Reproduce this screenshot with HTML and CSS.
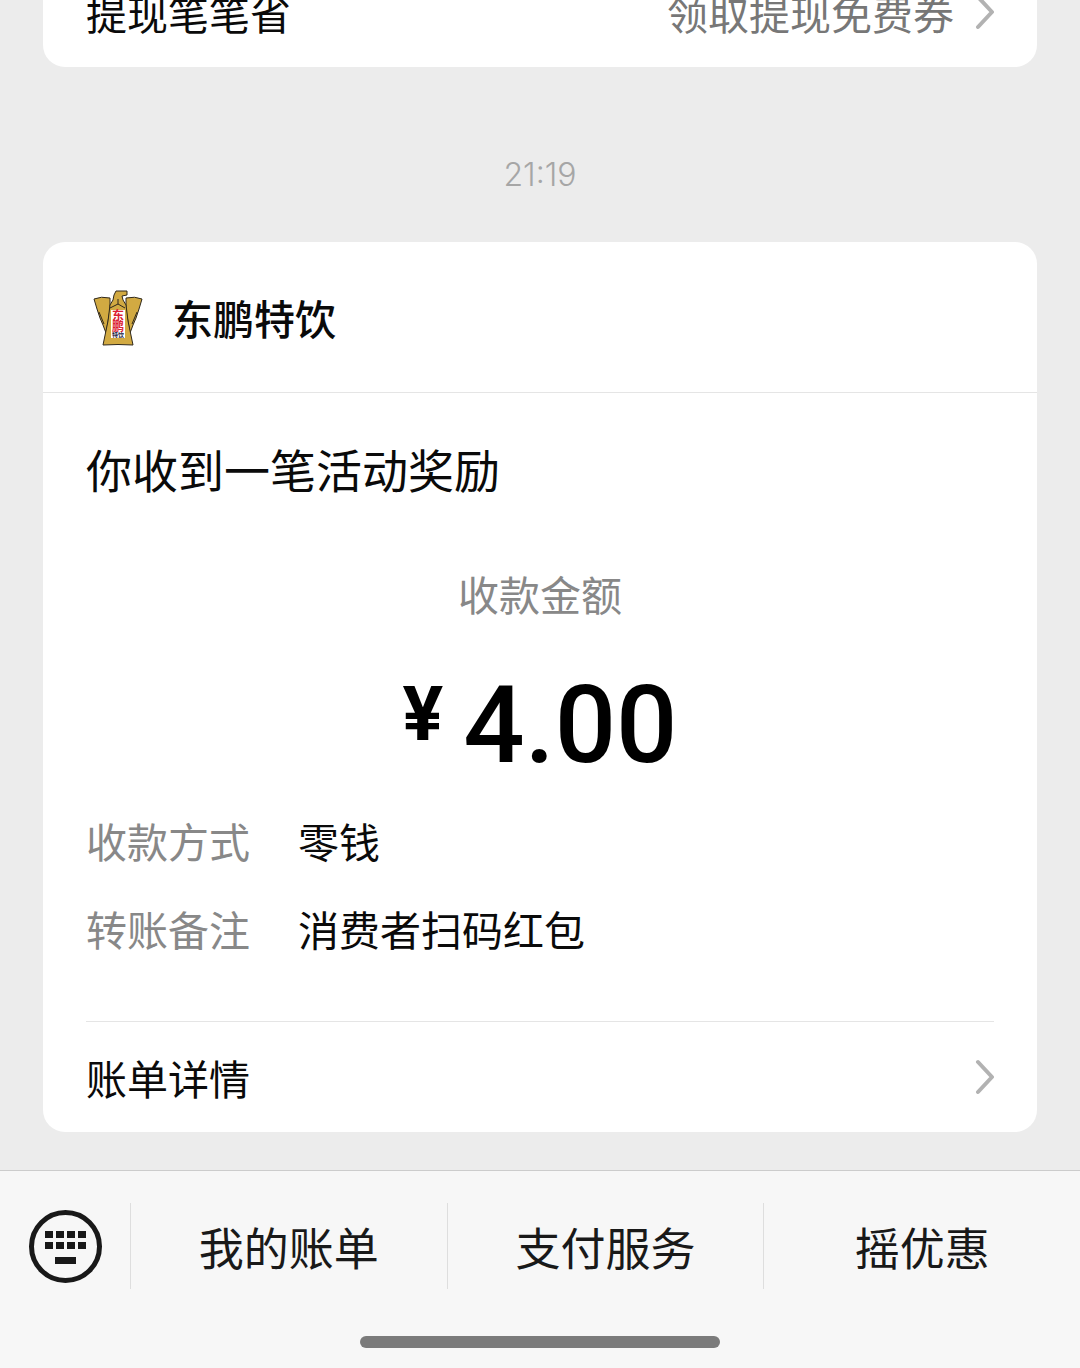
FILE: index.html
```html
<!DOCTYPE html>
<html lang="zh-CN">
<head>
  <meta charset="UTF-8">
  <meta name="viewport" content="width=device-width, initial-scale=1">
  <title>支付消息</title>
  <link rel="stylesheet" href="styles.css">
</head>
<body>

<main class="chat">
  <section class="card">
    <a class="card-link" href="#coupon">
      <span>提现笔笔省</span>
      <span class="hint">领取提现免费券</span>
      <svg class="chevron" viewBox="0 0 20 36"><path d="M4 3l14 15L4 33"/></svg>
    </a>
  </section>

  <time class="time">21:19</time>

  <section class="card">
    <header class="card-header">
      <svg class="logo" viewBox="0 -1 64 64">
        <g class="eagle">
          <path d="M8 13q7-3 16-1v12l-4 23-3-8-3-7-3-9z"/>
          <path d="M56 13q-7-3-16-1v12l4 23 3-8 3-7 3-9z"/>
          <path d="M17 59l5-24 2-16 3-5 1-5 2-4h11v4l-5 1 1 4 3 5 2 16 5 24q-15-1-30 0z"/>
        </g>
        <path class="neck" d="M24 22l8-4 7 4M32 13v5M13 26l5 12M51 26l-5 12"/>
        <path class="label" d="M25 24h14v28H25z"/>
        <text class="brand" x="32" y="34">东</text>
        <text class="brand" x="32" y="45">鹏</text>
        <text class="drink" x="32" y="51">特饮</text>
      </svg>
      <h1>东鹏特饮</h1>
    </header>

    <div class="card-body">
      <h2>你收到一笔活动奖励</h2>
      <p class="amount-label">收款金额</p>
      <p class="amount"><span class="yen">¥</span><span>4.00</span></p>

      <dl class="details">
        <dt>收款方式</dt>
        <dd>零钱</dd>
        <dt>转账备注</dt>
        <dd>消费者扫码红包</dd>
      </dl>
    </div>

    <a class="card-link bill" href="#bill">
      <span>账单详情</span>
      <svg class="chevron" viewBox="0 0 20 36"><path d="M4 3l14 15L4 33"/></svg>
    </a>
  </section>
</main>

<footer class="footer">
  <nav class="menu">
    <button class="keyboard" type="button" aria-label="键盘">
      <svg viewBox="0 0 74 74">
        <circle cx="37.5" cy="37.5" r="34"/>
        <path d="M17 22h8v7h-8zM28 22h8v7h-8zM39 22h8v7h-8zM50 22h8v7h-8zM17 33h8v7h-8zM28 33h8v7h-8zM39 33h8v7h-8zM50 33h8v7h-8zM27 48h21v7H27z"/>
      </svg>
    </button>
    <button class="menu-item" type="button">我的账单</button>
    <button class="menu-item" type="button">支付服务</button>
    <button class="menu-item" type="button">摇优惠</button>
  </nav>
  <div class="home-bar"></div>
</footer>

</body>
</html>
```

FILE: styles.css
```css
* {
  box-sizing: border-box;
}

body {
  margin: 0;
  height: 100vh;
  display: flex;
  flex-direction: column;
  background-color: #ececec;
  color: #0a0a0a;
  font-family: "Noto Sans CJK SC", sans-serif;
  font-size: 41px;
  line-height: 60px;
}

h1, h2, p, dl, dd {
  margin: 0;
}

/* newest message stays at the bottom, older ones run off the top */
.chat {
  flex: 1;
  min-height: 0;
  display: flex;
  flex-direction: column;
  justify-content: flex-end;
  padding: 0 43px 38px;
  overflow: hidden;
}

.card {
  flex-shrink: 0;
  background-color: #fff;
  border-radius: 22px;
}

.card-link {
  display: flex;
  align-items: center;
  height: 110px;
  padding: 0 43px;
  color: inherit;
  text-decoration: none;
}

.card-link .hint {
  margin-left: auto;
  color: #777;
}

.chevron {
  width: 20px;
  height: 36px;
  margin-left: auto;
  fill: none;
  stroke: #b2b2b2;
  stroke-width: 4;
  stroke-linecap: round;
  stroke-linejoin: round;
}

.hint + .chevron {
  margin-left: 20px;
}

.time {
  flex-shrink: 0;
  margin: 84px 0 43px;
  color: #a6a6a6;
  font-family: Inter, sans-serif;
  font-size: 32px;
  font-weight: 350;
  line-height: 48px;
  text-align: center;
}

.card-header {
  display: flex;
  align-items: center;
  gap: 22px;
  height: 151px;
  padding: 0 43px;
  border-bottom: 1px solid #e5e5e5;
}

.card-header h1 {
  font-size: 41px;
  font-weight: 500;
}

.logo {
  width: 64px;
  height: 64px;
}

.logo .eagle {
  fill: #d2aa42;
  stroke: #30291c;
  stroke-width: 1;
}

.logo .neck {
  fill: none;
  stroke: #30291c;
  stroke-width: 1;
}

.logo .label {
  fill: #fff;
}

.logo text {
  text-anchor: middle;
  font-weight: 700;
}

.logo .brand {
  fill: #dc1f35;
  font-size: 12px;
}

.logo .drink {
  fill: #222244;
  font-size: 6px;
}

.card-body {
  padding: 43px 43px 63px;
}

.card-body h2 {
  font-size: 46px;
  font-weight: 400;
  line-height: 64px;
}

.amount-label {
  margin-top: 63px;
  color: #888;
  text-align: center;
}

.amount {
  display: flex;
  justify-content: center;
  gap: 20px;
  margin: 47px 0 30px;
  color: #000;
  font-family: Roboto, sans-serif;
  font-size: 108px;
  font-weight: 500;
  line-height: 110px;
}

.amount .yen {
  font-size: 76px;
  font-weight: 700;
  line-height: 88px;
}

.details {
  display: grid;
  grid-template-columns: auto 1fr;
  gap: 28px 48px;
}

.details dt {
  color: #888;
}

.bill {
  height: 111px;
  margin: 0 43px;
  padding: 0;
  border-top: 1px solid #e5e5e5;
}

.footer {
  flex-shrink: 0;
  padding: 32px 0 20px;
  background-color: #f7f7f7;
  border-top: 1px solid #ccc;
}

.menu {
  display: flex;
  height: 86px;
}

.menu button {
  padding: 0;
  border: 0;
  background: none;
  color: #191919;
  font-family: inherit;
  font-size: 45px;
  cursor: pointer;
}

.menu .keyboard {
  display: flex;
  align-items: center;
  justify-content: center;
  width: 130px;
}

.keyboard svg {
  width: 74px;
  height: 74px;
  fill: #191919;
}

.keyboard circle {
  fill: none;
  stroke: #191919;
  stroke-width: 5;
}

.menu .menu-item {
  flex: 1;
  border-left: 1px solid #dedede;
}

.home-bar {
  width: 33.33%;
  height: 12px;
  margin: 47px auto 0;
  border-radius: 6px;
  background-color: #7b7b7b;
}
```
